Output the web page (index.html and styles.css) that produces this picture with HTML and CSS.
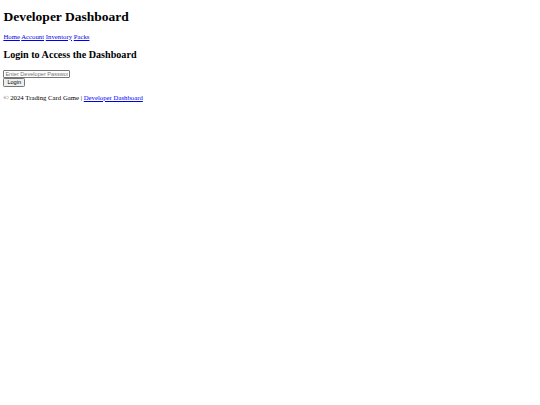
FILE: index.html
```html
<!DOCTYPE html>
<html lang="en">
<head>
<meta charset="utf-8">
<title>Developer Dashboard</title>
<link rel="stylesheet" href="styles.css">
</head>
<body class="page-body">
<header class="site-header">
  <h1 class="site-title">Developer Dashboard</h1>
  <nav class="site-nav">
    <a href="#">Home</a>
    <a href="#">Account</a>
    <a href="#">Inventory</a>
    <a href="#">Packs</a>
  </nav>
</header>
<main class="content">
  <h2 class="section-title">Login to Access the Dashboard</h2>
  <form class="login-form">
    <input class="password-input" type="password" placeholder="Enter Developer Password">
    <button class="login-button" type="button">Login</button>
  </form>
</main>
<footer class="site-footer">
  <p class="footer-text">© 2024 Trading Card Game | <a href="#">Developer Dashboard</a></p>
</footer>
</body>
</html>
```

FILE: styles.css
```css
html {
  background: #ffffff;
}
.page-body {
  margin: 0 3.4px;
  padding-top: 8.5px;
  font-family: "Liberation Serif", "Times New Roman", serif;
  font-size: 6.75px;
  line-height: 1.15;
  color: #000000;
}
.site-title {
  font-size: 13.5px;
  line-height: 1.15;
  margin: 0 0 8.6px;
}
.site-nav {
  line-height: 7.6px;
}
.section-title {
  font-size: 10.125px;
  line-height: 1.15;
  margin: 8.6px 0 9.4px;
}
.site-nav a,
.footer-text a {
  color: #0000ee;
}
.login-form {
  margin: 0;
  display: flex;
  flex-direction: column;
  align-items: flex-start;
}
.password-input {
  box-sizing: border-box;
  width: 66.5px;
  height: 8.5px;
  padding: 0 1px;
  margin: 0;
  border: 0.8px solid #767676;
  border-radius: 1px;
  font-family: "Liberation Sans", Arial, sans-serif;
  font-size: 5.6px;
  color: #000;
  background: #fff;
}
.password-input::placeholder {
  color: #757575;
}
.login-button {
  box-sizing: border-box;
  height: 9px;
  padding: 0 3px;
  margin: 0;
  border: 0.8px solid #767676;
  border-radius: 1.3px;
  background: #efefef;
  font-family: "Liberation Sans", Arial, sans-serif;
  font-size: 5.6px;
  line-height: 1;
  color: #000;
}
.footer-text {
  margin: 6.4px 0;
}
```
